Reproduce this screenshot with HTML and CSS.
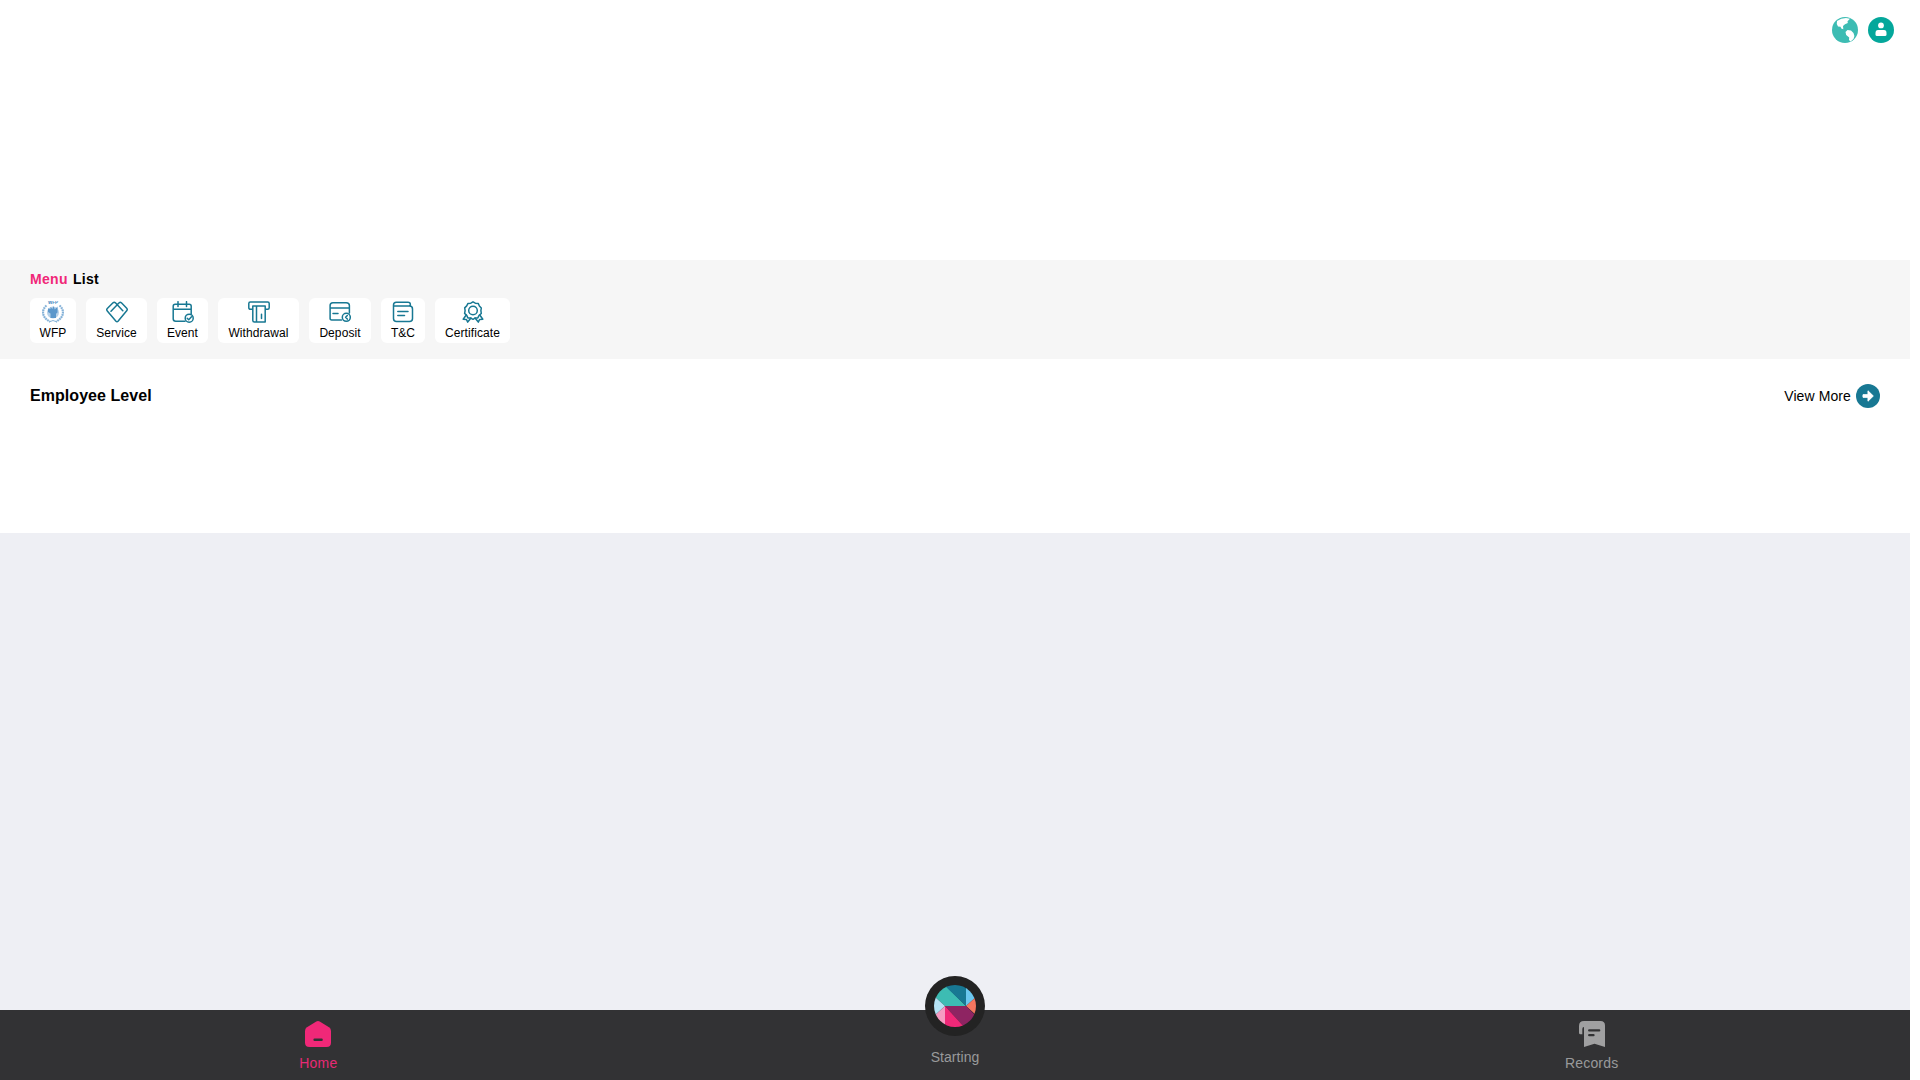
FILE: index.html
```html
<!DOCTYPE html>
<html lang="en">
<head>
<meta charset="utf-8">
<title>Home</title>
<link rel="stylesheet" href="styles.css">
</head>
<body>
<div class="page">
  <header class="hero">
    <svg class="hero-icon" viewBox="0 0 26 26"><circle cx="13" cy="13" r="13" fill="#3dbcb3"/><path fill="#fff" d="M5 4Q9 .9 14 .9L18 1.800 15.500 4.200 15.800 6 13 7.200 11 9 11.300 12.300 9.300 11.600 8.500 9.800 6 9.500 4.800 7ZM13.500 15L15.500 13 19 13.400 21.500 16 22.400 19 21.500 22 18.500 24.500 17 23 17.200 20.500 14.200 18Z"/></svg>
    <svg class="hero-icon" viewBox="0 0 26 26"><circle cx="13" cy="13" r="13" fill="#04a79b"/><circle cx="13" cy="8.400" r="2.900" fill="#fff"/><path fill="#fff" d="M10 13h6q2.500 0 2.500 3v1.500q0 1.500-1.500 1.500H9q-1.500 0-1.500-1.500V16q0-3 2.500-3Z"/></svg>
  </header>

  <section class="menu">
    <h2 class="menu-title"><span class="accent">Menu</span> List</h2>
    <nav class="cards">
      <a class="card">
        <svg class="card-icon" viewBox="0 0 22 22" fill="none">
          <text class="emblem-text" x="11" y="3.200" text-anchor="middle">WFP</text>
          <path d="M4.500 4.500C-1 9 0 17 8 20.500M17.500 4.500c5.500 4.500 4.500 12.500-3.500 16" stroke="#85b2d8" stroke-width="2.200" stroke-dasharray="1.800 .6"/>
          <path d="M7 21q4-3 8 0" stroke="#85b2d8"/>
          <circle cx="11" cy="11.500" r="6" fill="#b5d0e8"/>
          <path fill="#5b97cb" d="M6 7.500l2.500.5V6l2 2 1-3 1.300 3.500 2.700-3v6l-1.500 1.300v4.200H8.500v-4.500L6 11Z"/>
        </svg>
        <span>WFP</span>
      </a>
      <a class="card">
        <svg class="card-icon line" viewBox="0 0 22 22"><path d="M11 4L13.200 1.800Q14.200.800 15.400 1.800L20.700 7.300Q21.800 8.500 20.700 9.700L12 20.300Q11 21.400 10 20.300L1.300 9.900Q.2 8.700 1.300 7.500L7 1.800Q8.200.8 9.400 1.800L16.800 9.700M11 4L5 10.300"/></svg>
        <span>Service</span>
      </a>
      <a class="card">
        <svg class="card-icon line" viewBox="0 0 22 22"><path d="M13 20.300H3.700Q1.200 20.300 1.200 17.800V5.200Q1.200 3.200 3.200 3.200H17.200Q19.200 3.200 19.200 5.200V13M1.200 8.200H19.200M6 .7V5.500M14.500.7V5.500"/><circle cx="17.200" cy="17.200" r="4"/><path d="M15.200 17.300l1.500 1.400 2.800-2.900"/></svg>
        <span>Event</span>
      </a>
      <a class="card">
        <svg class="card-icon line" viewBox="0 0 22 22"><path d="M4.800 8.300H2.500Q.8 8.300.8 6.800V2.500Q.8 1 2.300 1H19.700Q21.200 1 21.200 2.500V6.800Q21.200 8.300 19.700 8.300H17.200M4.800 5H17.200V21H6.500Q4.800 21 4.800 19.500ZM8.500 5V21M13.500 13.200V17.500"/></svg>
        <span>Withdrawal</span>
      </a>
      <a class="card">
        <svg class="card-icon line" viewBox="0 0 22 22"><path d="M12.500 18.900H2.600Q1.100 18.900 1.100 17.400V4.500Q1.100 1.700 3.900 1.700H17.200Q20.400 1.700 20.400 4.500V12M1.100 6.900H20.400M4 12.500H9"/><circle cx="17.300" cy="16.300" r="4"/><path d="M18.300 14.500l-1.700 1.800 1.700 1.800"/></svg>
        <span>Deposit</span>
      </a>
      <a class="card">
        <svg class="card-icon line" viewBox="0 0 22 22"><path d="M1.500 6V4Q1.500 1.200 4.300 1.200H16Q18.300 1.200 18.300 3.200V5M1.500 5H17.500Q20.500 5 20.500 8V17.500Q20.500 20.500 17.500 20.500H4.500Q1.500 20.500 1.500 17.500ZM5.800 10.500H16M5.800 14.500H12.500"/></svg>
        <span>T&amp;C</span>
      </a>
      <a class="card">
        <svg class="card-icon line" viewBox="0 0 22 22"><path d="M11 .8l2.300 1.400 2.900.2 1.200 2.600 1.900 2-.4 2.700.4 2.800-2.200 1.900-1.300 2.500-2.800.2-2 1.200-2.300-1.200-2.800-.2-1.200-2.500-2.100-2 .5-2.700-.4-2.800 2-2L6 2.400l2.800-.2Z"/><circle cx="11" cy="9.500" r="4.300"/><path d="M4.200 14L1.200 18.200l3.200.3 1.300 2.600L9 17.100M17.800 14l3 4.200-3.200.3-1.300 2.600-3.300-4"/></svg>
        <span>Certificate</span>
      </a>
    </nav>
  </section>

  <section class="level">
    <h2 class="level-title">Employee Level</h2>
    <a class="more">View More
      <svg class="more-icon" viewBox="0 0 24 24"><circle cx="12" cy="12" r="12" fill="#187893"/><path fill="#fff" stroke="#fff" stroke-linejoin="round" d="M7 10.700H12V6.800L17.300 12 12 17.200V13.300H7Z"/></svg>
    </a>
  </section>

  <main class="rest"></main>

  <nav class="tabs">
    <a class="tab active">
      <svg class="tab-icon" viewBox="0 0 26 26"><path fill="#f02878" d="M11.300.5Q13-.5 14.700.5L24 6.300Q26 7.600 26 10V21.500Q26 26 21.500 26H4.500Q0 26 0 21.500V10Q0 7.600 2 6.300Z"/><path d="M9.600 18.800H16.600" stroke="#323234" stroke-width="2.400" stroke-linecap="round"/></svg>
      <span>Home</span>
    </a>
    <a class="tab start">
      <svg class="start-icon" viewBox="0 0 60 60">
        <defs><clipPath id="gem"><circle cx="30" cy="30" r="21"/></clipPath></defs>
        <circle cx="30" cy="30" r="30" fill="#232323"/>
        <g clip-path="url(#gem)">
          <path fill="#3dbcb3" d="M9 9H20L41 30H20L9 20Z"/>
          <path fill="#187893" d="M20 9H41V30L20 10Z"/>
          <path fill="#6cc7ee" d="M41 8H52V20L41 30Z"/>
          <path fill="#f4765f" d="M52 20V40L41 30Z"/>
          <path fill="#8e2462" d="M20 30H41L51 40V51H39Z"/>
          <path fill="#f02878" d="M20 30L40 52H20Z"/>
          <path fill="#f69bc2" d="M20 30V51H9V40Z"/>
          <path fill="#b5e3f6" d="M9 20L20 30 9 40Z"/>
        </g>
      </svg>
      <span>Starting</span>
    </a>
    <a class="tab">
      <svg class="tab-icon" viewBox="0 0 26 26"><path fill="#a0a0a1" d="M5 0H21.500Q26 0 26 4.500V26L15.500 22.700 5 26V6Q3.300 6 3.300 8V13.300H1.500Q0 13.300 0 11.800V5Q0 0 5 0Z"/><path d="M10.200 9.400H20.200M10.200 14.200H14.500" stroke="#323234" stroke-width="2.300" stroke-linecap="round"/></svg>
      <span>Records</span>
    </a>
  </nav>
</div>
</body>
</html>
```
FILE: styles.css
```css
* { box-sizing: border-box; }
body {
  margin: 0;
  background: #fff;
  color: #000;
  font-family: "Liberation Sans", Arial, sans-serif;
}
h2 { margin: 0; }
svg { display: block; flex: none; }

.page {
  display: flex;
  flex-direction: column;
  height: 100vh;
  margin-right: 10px;
}

.hero {
  display: flex;
  justify-content: flex-end;
  gap: 10px;
  height: 260px;
  padding: 17px 16px 0;
}
.hero-icon { width: 26px; height: 26px; }

.menu {
  height: 99px;
  padding: 11px 30px 0;
  background: #f6f6f6;
}
.menu-title {
  font-size: 14px;
  line-height: 17px;
  letter-spacing: 0.3px;
  word-spacing: 1px;
}
.accent { color: #f02878; }
.cards {
  display: grid;
  grid-template-columns: 46px 61px 51px 81px 62px 44px 75px;
  gap: 10px;
  margin-top: 10px;
}
.card {
  display: flex;
  flex-direction: column;
  align-items: center;
  height: 45px;
  padding-top: 3px;
  border-radius: 6px;
  background: #fff;
  font-size: 12px;
  line-height: 20px;
  letter-spacing: 0.08px;
}
.card-icon { width: 22px; height: 22px; }
.line {
  fill: none;
  stroke: #187893;
  stroke-width: 1.5;
  stroke-linecap: round;
  stroke-linejoin: round;
}
.emblem-text {
  fill: #4387be;
  font-size: 4.5px;
  font-weight: bold;
}

.level {
  display: flex;
  justify-content: space-between;
  align-items: flex-start;
  height: 174px;
  padding: 25px 30px 0;
}
.level-title { font-size: 16px; line-height: 24px; letter-spacing: 0.05px; }
.more {
  display: flex;
  align-items: center;
  gap: 5px;
  font-size: 14px;
  line-height: 24px;
  letter-spacing: 0.1px;
}
.more-icon { width: 24px; height: 24px; }

.rest { flex: 1; background: #eeeff4; }

.tabs {
  display: grid;
  grid-template-columns: repeat(3, 1fr);
  height: 70px;
  background: #323234;
}
.tab {
  display: flex;
  flex-direction: column;
  align-items: center;
  padding-top: 11px;
  color: #999a9b;
  font-size: 14px;
  line-height: 16px;
  letter-spacing: 0.2px;
}
.tab-icon { width: 26px; height: 26px; margin-bottom: 8px; }
.active { color: #e62a75; }
.start { padding-top: 0; letter-spacing: 0.05px; }
.start-icon { width: 60px; height: 60px; margin: -34px 0 13px; }
```
